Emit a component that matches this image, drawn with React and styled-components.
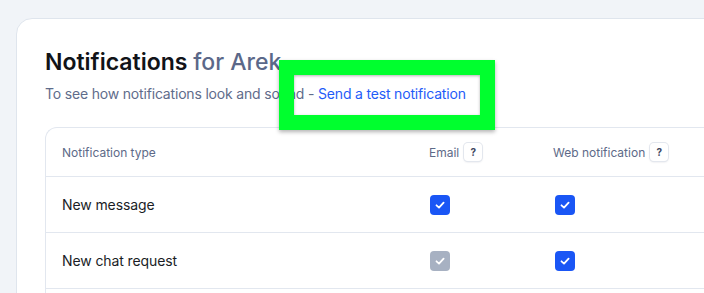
import React from "react";
import styled, { createGlobalStyle } from "styled-components";

const Global = createGlobalStyle`
  html, body { margin: 0; padding: 0; background: #f1f4f8; }
  body { font-family: Inter, "Noto Sans", sans-serif; -webkit-font-smoothing: antialiased; }
`;

const Page = styled.div`
  position: relative;
  width: 704px;
  height: 293px;
  overflow: hidden;
  padding: 18px 0 0 16px;
  box-sizing: border-box;
`;

const Card = styled.div`
  width: 760px;
  height: 400px;
  background: #fff;
  border: 1px solid #dfe5ed;
  border-radius: 16px 0 0 0;
  box-sizing: border-box;
  padding: 28px 0 0 28px;
`;

const Title = styled.h1`
  margin: 0;
  font-size: 23px;
  line-height: 30px;
  font-weight: 600;
  color: #111318;
  letter-spacing: 0;
`;

const Muted = styled.span`
  color: #5b6889;
  font-weight: 500;
`;

const Subtitle = styled.p`
  margin: 7px 0 0;
  font-size: 14px;
  line-height: 20px;
  letter-spacing: -0.18px;
  color: #5f6c8b;
`;

const Link = styled.a`
  color: #1f5cf8;
  text-decoration: none;
`;

const Table = styled.div`
  margin-top: 23px;
  border: 1px solid #e2e7ef;
  border-right: none;
  border-radius: 12px 0 0 0;
`;

const Row = styled.div`
  display: grid;
  grid-template-columns: 383px 124px 1fr;
  align-items: center;
  height: ${(p) => (p.$header ? "48px" : "55px")};
  border-top: ${(p) => (p.$header ? "none" : "1px solid #e2e7ef")};
`;

const Cell = styled.div`
  display: flex;
  align-items: center;
  gap: 5px;
  padding-left: ${(p) => (p.$first ? "16px" : "0")};
  font-size: ${(p) => (p.$head ? "12px" : "14px")};
  letter-spacing: ${(p) => (p.$head ? "0" : "-0.1px")};
  color: ${(p) => (p.$head ? "#5d6a88" : "#1a1d26")};
`;

const Help = styled.span`
  display: inline-flex;
  align-items: center;
  justify-content: center;
  width: 18px;
  height: 18px;
  border-radius: 4px;
  background: #fff;
  box-shadow: 0 0 0 1px #e3e7ee, 0 1px 2px rgba(30, 40, 70, 0.18);
  font-size: 10px;
  font-weight: 700;
  color: #3d4660;
`;

const Box = styled.span`
  display: inline-flex;
  align-items: center;
  justify-content: center;
  width: 20px;
  height: 20px;
  margin-left: ${(p) => p.$offset || 0}px;
  border-radius: 4px;
  background: ${(p) => (p.$disabled ? "#a7b1c2" : "#1a56f5")};
`;

const Highlight = styled.div`
  position: absolute;
  left: 279px;
  top: 60px;
  width: 216px;
  height: 70px;
  box-sizing: border-box;
  border: 15px solid #00ff2e;
  box-shadow: 0 2px 4px rgba(0, 0, 0, 0.3), inset 0 1px 3px rgba(0, 0, 0, 0.3);
  pointer-events: none;
`;

const Check = () => (
  <svg width="12" height="12" viewBox="0 0 12 12" fill="none">
    <path d="M2.5 6.3 L5 8.6 L9.6 3.6" stroke="#fff" strokeWidth="1.8" strokeLinecap="round" strokeLinejoin="round" />
  </svg>
);

const CheckBox = ({ disabled, offset }) => (
  <Box $disabled={disabled} $offset={offset}>
    <Check />
  </Box>
);

export default function App() {
  return (
    <>
      <Global />
      <Page>
        <Card>
          <Title>
            Notifications <Muted>for Arek</Muted>
          </Title>
          <Subtitle>
            To see how notifications look and sound - <Link href="#">Send a test notification</Link>
          </Subtitle>
          <Table>
            <Row $header>
              <Cell $first $head>Notification type</Cell>
              <Cell $head>
                Email <Help>?</Help>
              </Cell>
              <Cell $head>
                Web notification <Help>?</Help>
              </Cell>
            </Row>
            <Row>
              <Cell $first>New message</Cell>
              <Cell><CheckBox offset={1} /></Cell>
              <Cell><CheckBox offset={2} /></Cell>
            </Row>
            <Row>
              <Cell $first>New chat request</Cell>
              <Cell><CheckBox disabled offset={1} /></Cell>
              <Cell><CheckBox offset={2} /></Cell>
            </Row>
            <Row>
              <Cell $first></Cell>
            </Row>
          </Table>
        </Card>
        <Highlight />
      </Page>
    </>
  );
}
